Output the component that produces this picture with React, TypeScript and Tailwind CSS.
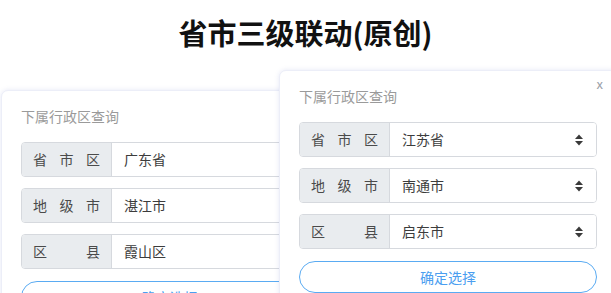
const FONT = "font-['Noto_Sans_CJK_SC','Noto_Sans',sans-serif]";

type Row = { label: string[]; value: string };

function SortArrows() {
  return (
    <svg width="10" height="14" viewBox="0 0 10 14" aria-hidden>
      <path d="M1 6 L5 1.5 L9 6 Z" fill="#3a3a3a" />
      <path d="M1 8 L5 12.5 L9 8 Z" fill="#3a3a3a" />
    </svg>
  );
}

function SelectRow({ row }: { row: Row }) {
  return (
    <div className="flex h-[35px] w-full overflow-hidden rounded-[4px] border border-[#d6d9de]">
      <div className="flex w-[90px] shrink-0 items-center justify-between border-r border-[#d6d9de] bg-[#e9ecef] px-[11px] text-[14px] text-[#4a4a4a]">
        {row.label.map((c, i) => (
          <span key={i}>{c}</span>
        ))}
      </div>
      <div className="flex flex-1 items-center justify-between bg-white pl-[12px] pr-[12px] text-[14px] text-[#3c3c3c]">
        <span>{row.value}</span>
        <SortArrows />
      </div>
    </div>
  );
}

function RegionCard({ rows, closable, className = "" }: { rows: Row[]; closable?: boolean; className?: string }) {
  return (
    <div
      className={`relative w-[338px] shrink-0 rounded-[7px] border border-[#eceef8] bg-white px-[19px] pt-[15px] pb-[20px] shadow-[0_0_5px_rgba(110,120,200,0.18)] ${className}`.trim()}
    >
      {closable && <span className="absolute top-[3px] right-[13px] text-[13px] text-[#9aa0a8]">x</span>}
      <p className="h-[20px] text-[14px] leading-[20px] text-[#9a9a9a]">下属行政区查询</p>
      <div className="mt-[16px] flex flex-col gap-[11px]">
        {rows.map((r, i) => (
          <SelectRow key={i} row={r} />
        ))}
      </div>
      <button className="mt-[12px] flex h-[32px] w-full items-center justify-center rounded-full border-[1.5px] border-[#5aabf2] text-[14px] text-[#4a9ef0]">
        确定选择
      </button>
    </div>
  );
}

export default function App() {
  const left: Row[] = [
    { label: ["省", "市", "区"], value: "广东省" },
    { label: ["地", "级", "市"], value: "湛江市" },
    { label: ["区", "县"], value: "霞山区" },
  ];
  const right: Row[] = [
    { label: ["省", "市", "区"], value: "江苏省" },
    { label: ["地", "级", "市"], value: "南通市" },
    { label: ["区", "县"], value: "启东市" },
  ];

  return (
    <div className={`h-[293px] w-[611px] overflow-hidden bg-white ${FONT}`}>
      <h1 className="flex h-[70px] justify-center pt-[13px] text-[29px] leading-[38px] font-bold text-[#111]">
        省市三级联动(原创)
      </h1>
      <div className="flex items-start">
        <RegionCard rows={left} className="mt-[20px] ml-[1px]" />
        <RegionCard rows={right} closable className="z-10 -ml-[60px]" />
      </div>
    </div>
  );
}
